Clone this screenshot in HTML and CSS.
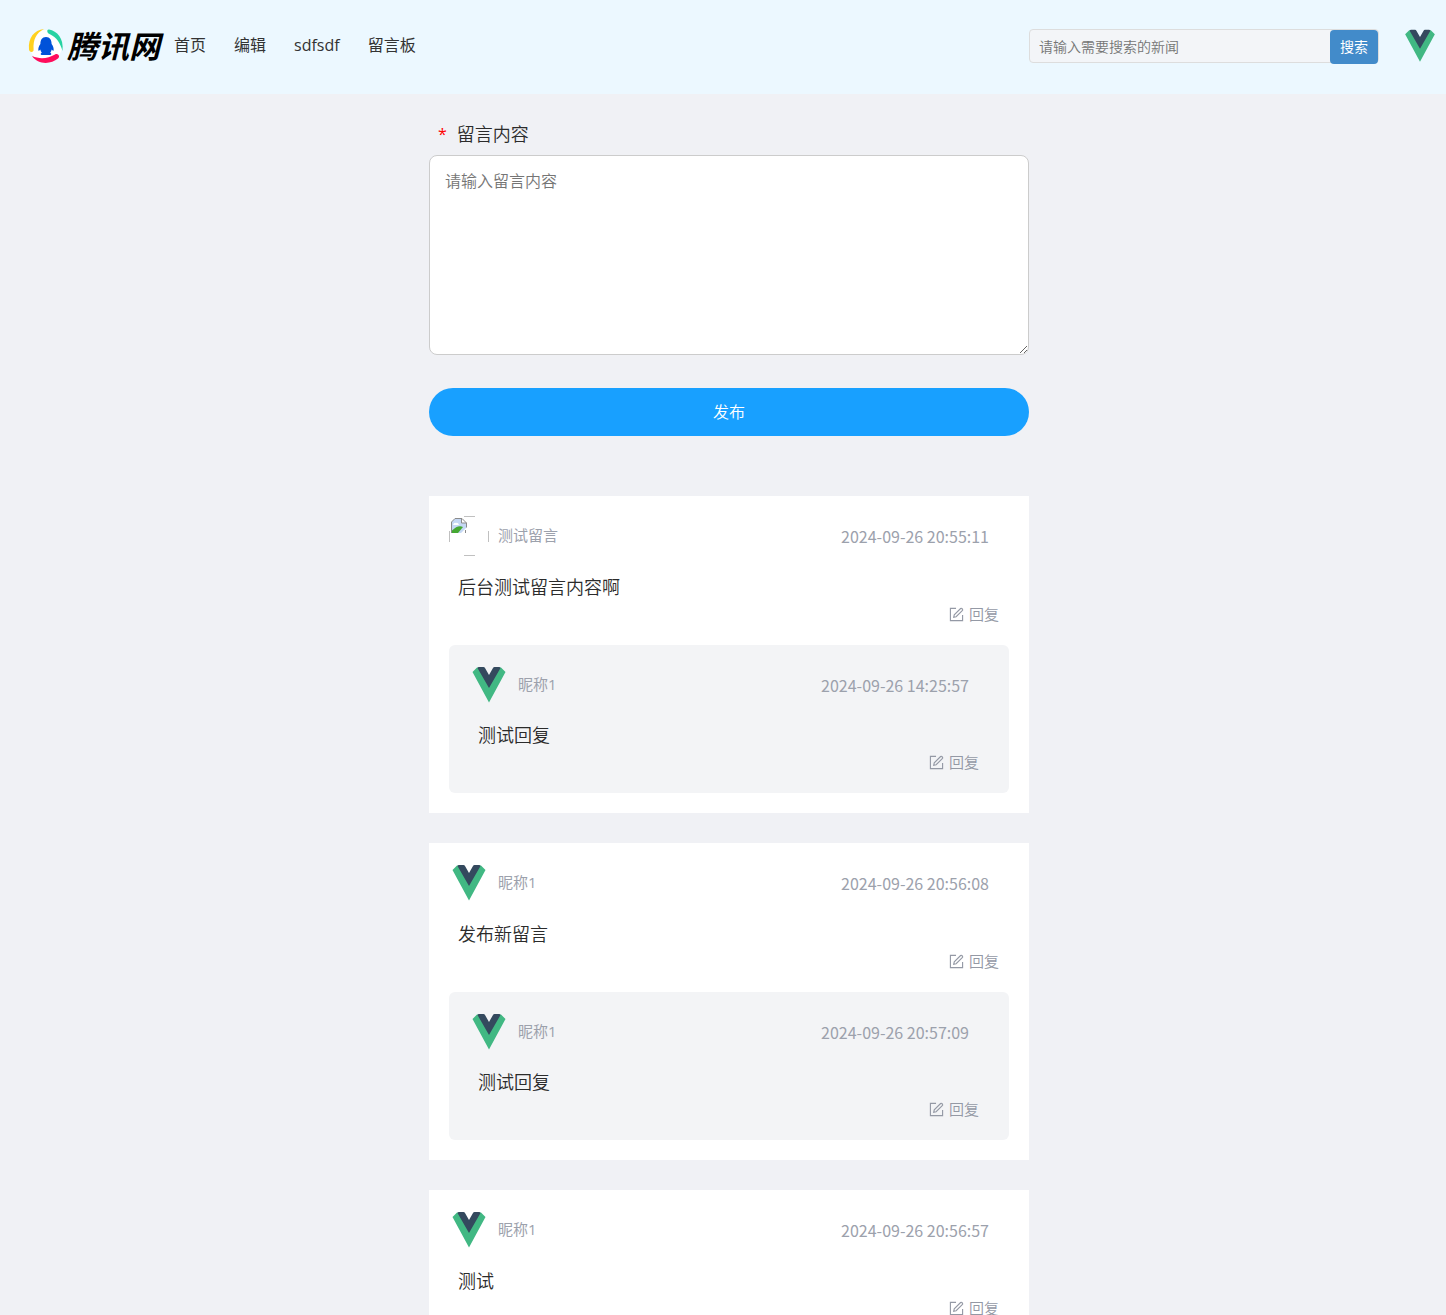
FILE: index.html
```html
<!DOCTYPE html>
<html lang="zh-CN">
<head>
<meta charset="utf-8">
<meta name="viewport" content="width=device-width, initial-scale=1">
<title>留言板</title>
<link rel="stylesheet" href="styles.css">
</head>
<body>
<svg class="defs" width="0" height="0" aria-hidden="true">
  <symbol id="vue" viewBox="0 0 40 40">
    <path fill="#41b883" d="M3.500 7 8 2.500h6L20 12l6-9.500h6L36.500 7 20 37.500z"/>
    <path fill="#34495e" d="M8.500 3q.5-1 1.500-1h4.500q1 0 1.500 1l4 7 4-7q.5-1 1.500-1H30q1 0 1.500 1L20 23z"/>
  </symbol>
  <symbol id="edit" viewBox="0 0 16 16">
    <g fill="none" stroke="currentColor" stroke-width="1.200">
      <path d="M7.500 1.500h-6v13h13v-6"/>
      <path d="m5 11 .6-2.600 6.800-6.800q.6-.5 1.200 0l.8.8q.5.6 0 1.200l-6.800 6.800z"/>
    </g>
  </symbol>
</svg>

<header class="topbar">
  <a class="logo" href="#" aria-label="腾讯网">
    <svg class="logo-mark" viewBox="0 0 36 36" aria-hidden="true">
      <circle cx="18" cy="18" r="16" fill="#fff"/>
      <path fill="#ffd11f" d="M16 1C6 2 0 10 1 21.500c.3 3.300 5 3.200 4.600-.2C5 12 8 5 16 1z"/>
      <path fill="#27d3a2" d="M21 1.500C29 3 36 10 34.500 23 32 15 29 9.500 21.500 6c-3.200-1.500-2.500-5-.5-4.500z"/>
      <path fill="#ff0d5c" d="M4 28c8 3.500 16 2.500 23-1.500 3-1.600 5.500 1.800 3 4C23 36.500 10 37 4 28z"/>
      <path fill="#0052d9" d="M18 9c-4 0-5.600 3-5.600 7-1.500 2-2.400 4.500-2 6.500.7.500 1.300-.2 1.900-.9.200 1.300.8 2.400 1.500 3.200-1.400.5-1.700 2.200.2 2.200h8c1.900 0 1.600-1.700.2-2.200.7-.8 1.300-1.900 1.500-3.200.6.700 1.200 1.400 1.900.9.400-2-.5-4.500-2-6.500 0-4-1.600-7-5.600-7z"/>
    </svg>
    <span class="logo-text">腾讯网</span>
  </a>
  <nav class="nav">
    <a href="#">首页</a>
    <a href="#">编辑</a>
    <a href="#">sdfsdf</a>
    <a href="#">留言板</a>
  </nav>
  <form class="search">
    <input class="search-input" type="text" placeholder="请输入需要搜索的新闻" aria-label="搜索新闻">
    <button class="search-button" type="button">搜索</button>
  </form>
  <svg class="user" role="img" aria-label="头像"><use href="#vue"/></svg>
</header>

<main class="board">
  <form class="publish">
    <label class="publish-label" for="message"><span class="required">*</span>留言内容</label>
    <textarea class="publish-text" id="message" placeholder="请输入留言内容"></textarea>
    <button class="publish-button" type="button">发布</button>
  </form>

  <article class="card">
    <div class="meta">
      <svg class="avatar" viewBox="0 0 40 40" role="img" aria-label="头像">
        <path fill="none" stroke="#c0c0c0" d="M15 .5h11M15 39.500h11M.5 15v11M39.500 15v11"/>
        <path fill="#c5d8f5" d="M2.500 17V6L6 2.500h6.500V7h5v4.500L12 17z"/>
        <path fill="#fff" d="M4 9q1-3 3-2 2-1 3 2z"/>
        <path fill="#45a832" d="M3 17v-2.500q6-6 11-3.500l-5 6z"/>
        <path fill="none" stroke="#8b8b8b" d="M2.500 17V6L6 2.500h7l4.500 4.500v4.500M12.500 2.500V7h5M16.500 14v3"/>
      </svg>
      <span class="name">测试留言</span>
      <time class="date">2024-09-26 20:55:11</time>
    </div>
    <p class="content">后台测试留言内容啊</p>
    <button class="reply" type="button"><svg class="edit"><use href="#edit"/></svg>回复</button>
    <article class="child">
      <div class="meta">
        <svg class="avatar" role="img" aria-label="头像"><use href="#vue"/></svg>
        <span class="name">昵称1</span>
        <time class="date">2024-09-26 14:25:57</time>
      </div>
      <p class="content">测试回复</p>
      <button class="reply" type="button"><svg class="edit"><use href="#edit"/></svg>回复</button>
    </article>
  </article>

  <article class="card">
    <div class="meta">
      <svg class="avatar" role="img" aria-label="头像"><use href="#vue"/></svg>
      <span class="name">昵称1</span>
      <time class="date">2024-09-26 20:56:08</time>
    </div>
    <p class="content">发布新留言</p>
    <button class="reply" type="button"><svg class="edit"><use href="#edit"/></svg>回复</button>
    <article class="child">
      <div class="meta">
        <svg class="avatar" role="img" aria-label="头像"><use href="#vue"/></svg>
        <span class="name">昵称1</span>
        <time class="date">2024-09-26 20:57:09</time>
      </div>
      <p class="content">测试回复</p>
      <button class="reply" type="button"><svg class="edit"><use href="#edit"/></svg>回复</button>
    </article>
  </article>

  <article class="card">
    <div class="meta">
      <svg class="avatar" role="img" aria-label="头像"><use href="#vue"/></svg>
      <span class="name">昵称1</span>
      <time class="date">2024-09-26 20:56:57</time>
    </div>
    <p class="content">测试</p>
    <button class="reply" type="button"><svg class="edit"><use href="#edit"/></svg>回复</button>
  </article>
</main>
</body>
</html>
```
FILE: styles.css
```css
* {
  box-sizing: border-box;
}

body {
  margin: 0;
  background: #f0f1f5;
  color: #2b2b2b;
  font: 350 16px/24px "Open Sans", "Noto Sans CJK SC", sans-serif;
}

button,
input,
textarea {
  font: inherit;
}

button {
  border: 0;
  padding: 0;
  cursor: pointer;
}

.defs {
  display: block;
}

/* top bar */
.topbar {
  display: flex;
  align-items: center;
  height: 94px;
  padding: 0 8px 2px 28px;
  background: #ecf8ff;
}

.logo {
  display: flex;
  align-items: center;
  gap: 3px;
  color: #000;
  text-decoration: none;
}

.logo-mark {
  width: 36px;
  height: 36px;
}

.logo-text {
  padding-bottom: 2px;
  font: italic 700 31px/36px "Noto Sans CJK SC", sans-serif;
}

.nav {
  display: flex;
  gap: 28px;
  margin-left: 14px;
  padding-bottom: 2px;
}

.nav a {
  color: #333;
  text-decoration: none;
  font-weight: 400;
}

.search {
  display: flex;
  width: 350px;
  height: 34px;
  margin-left: auto;
  border: 1px solid #ddd;
  border-radius: 4px;
  background: #f3f5f8;
}

.search-input {
  flex: 1;
  min-width: 0;
  padding: 1px 9px 0;
  border: 0;
  background: none;
  font-size: 14px;
}

.search-button {
  width: 48px;
  height: 34px;
  border-radius: 4px;
  background: #428bca;
  color: #fff;
  font-size: 14px;
  font-weight: 400;
}

.user {
  width: 36px;
  height: 36px;
  margin-left: 23px;
}

::placeholder {
  color: #757575;
}

/* message form */
.board {
  display: flex;
  flex-direction: column;
  align-items: center;
  gap: 30px;
  padding: 24px 0 30px 12px;
}

.publish {
  display: flex;
  flex-direction: column;
  width: 100%;
  max-width: 600px;
  margin-bottom: 30px;
}

.publish-label {
  display: flex;
  gap: 10px;
  padding: 4px 9px 9px;
  font-size: 18px;
}

.required {
  color: #f00;
  font-size: 16px;
  font-weight: 400;
}

.publish-text {
  height: 200px;
  padding: 13px 15px;
  border: 1px solid #ccc;
  border-radius: 8px;
  background: #fff;
}

.publish-button {
  height: 48px;
  margin-top: 33px;
  border-radius: 24px;
  background: #18a0ff;
  color: #fff;
}

/* messages */
.card {
  display: flex;
  flex-direction: column;
  width: 100%;
  max-width: 600px;
  padding: 20px;
  background: #fff;
}

.child {
  display: flex;
  flex-direction: column;
  margin-top: 20px;
  padding: 20px;
  border-radius: 6px;
  background: #f3f4f6;
}

.meta {
  display: flex;
  align-items: center;
  gap: 9px;
  color: #9ca1ac;
  font-weight: 400;
}

.avatar {
  width: 40px;
  height: 40px;
}

.name {
  padding-bottom: 3px;
  font-size: 15px;
}

.date {
  margin: 0 20px 0 auto;
  font-family: "Noto Sans CJK SC", sans-serif;
}

.content {
  margin: 14px 9px 0;
  font-size: 18px;
  line-height: 34px;
}

.child .content {
  margin-top: 13px;
}

.reply {
  display: flex;
  align-items: center;
  align-self: flex-end;
  gap: 5px;
  margin-right: 10px;
  background: none;
  color: #9499a5;
  font-size: 15px;
  line-height: 21px;
}

.edit {
  width: 15px;
  height: 15px;
}
```
